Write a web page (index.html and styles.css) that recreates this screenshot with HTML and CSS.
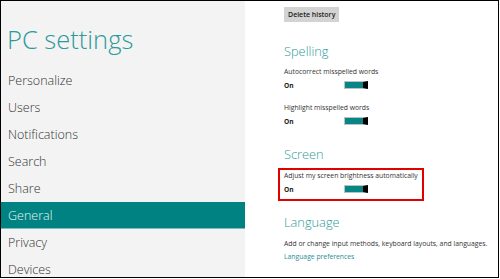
FILE: index.html
```html
<!DOCTYPE html>
<html lang="en">
<head>
    <meta charset="UTF-8">
    <title>PC settings</title>
    <link rel="stylesheet" href="styles.css">
</head>
<body>
    <div class="frame">
        <div class="barra">
            <h1>PC settings</h1>
            <ul>
                <li>Personalize</li>
                <li>Users</li>
                <li>Notifications</li>
                <li>Search</li>
                <li>Share</li>
                <li class="activo">General</li>
                <li>Privacy</li>
                <li>Devices</li>
            </ul>
        </div>

        <div class="contenido">
            <button class="boton">Delete history</button>

            <h2 class="titulo primero">Spelling</h2>
            <p class="etiqueta">Autocorrect misspelled words</p>
            <div class="fila">
                <span class="estado">On</span>
                <span class="toggle"></span>
            </div>
            <p class="etiqueta segundo">Highlight misspelled words</p>
            <div class="fila">
                <span class="estado">On</span>
                <span class="toggle"></span>
            </div>

            <h2 class="titulo">Screen</h2>
            <div class="marcado">
                <p class="etiqueta">Adjust my screen brightness automatically</p>
                <div class="fila">
                    <span class="estado">On</span>
                    <span class="toggle"></span>
                </div>
            </div>

            <h2 class="titulo idioma">Language</h2>
            <p class="etiqueta texto">Add or change input methods, keyboard layouts, and languages.</p>
            <a class="enlace" href="#">Language preferences</a>
        </div>
    </div>
</body>
</html>
```

FILE: styles.css
```css
body {
    margin: 0;
    padding: 0;
    background-color: #ffffff;
    font-family: "Open Sans", Arial, sans-serif;
}

.frame {
    display: flex;
    width: 499px;
    height: 278px;
    border: 1px solid #000000;
    box-sizing: border-box;
    overflow: hidden;
    background-color: #ffffff;
}

.barra {
    width: 244px;
    flex-shrink: 0;
    background-color: #f3f3f3;
    padding-top: 22px;
    box-sizing: border-box;
}

.barra h1 {
    margin: 0 0 12px 6px;
    font-size: 25.5px;
    line-height: 32px;
    font-weight: 300;
    color: #2b9a9a;
}

.barra ul {
    margin: 0;
    padding: 0;
    list-style: none;
}

.barra li {
    height: 27px;
    line-height: 27px;
    padding-left: 7px;
    font-size: 12.5px;
    font-weight: 300;
    color: #333333;
}

.barra li.activo {
    background-color: #008282;
    color: #e8f4f4;
    border-bottom: 1px solid #7fbcbc;
    height: 26px;
}

.contenido {
    padding-top: 6px;
    padding-left: 39px;
    display: flex;
    flex-direction: column;
    align-items: flex-start;
}

.boton {
    height: 15px;
    padding: 0 4px;
    margin: 0;
    border: none;
    background-color: #d3d3d3;
    font-family: "Open Sans", Arial, sans-serif;
    font-size: 7px;
    font-weight: 600;
    color: #222222;
}

.titulo {
    margin: 19px 0 0 0;
    font-size: 12.8px;
    line-height: 18px;
    font-weight: 300;
    color: #2f9c9c;
}

.titulo.primero {
    margin-top: 20px;
}

.titulo.idioma {
    margin-top: 12px;
}

.etiqueta {
    margin: 7px 0 0 0;
    font-size: 6.8px;
    line-height: 10px;
    color: #333333;
}

.etiqueta.segundo {
    margin-top: 13px;
}

.fila {
    display: flex;
    align-items: center;
    margin-top: 3px;
    height: 10px;
}

.estado {
    width: 60px;
    font-size: 6.6px;
    font-weight: 700;
    color: #222222;
}

.toggle {
    width: 24px;
    height: 8px;
    box-sizing: border-box;
    border: 1px solid #b8c4c4;
    border-right: 5px solid #000000;
    background-color: #0a8585;
}

.marcado {
    margin: 5px 0 0 -6px;
    width: 146px;
    border: 2px solid #e00000;
    padding: 1px 0 5px 4px;
    box-sizing: border-box;
}

.marcado .etiqueta {
    margin-top: 0;
}

.texto {
    margin-top: 8px;
}

.enlace {
    margin-top: 3px;
    font-size: 6.8px;
    line-height: 10px;
    color: #2a8f95;
    text-decoration: none;
}
```
